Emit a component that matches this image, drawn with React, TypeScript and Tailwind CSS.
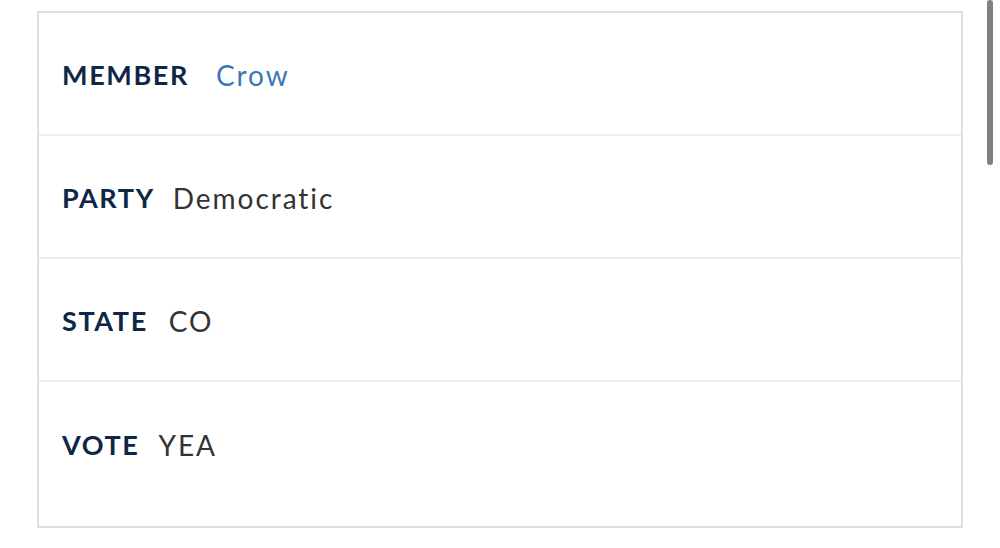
import React from "react";

const rows = [
  { label: "MEMBER", value: "Crow", link: true, gap: "ml-[27px]" },
  { label: "PARTY", value: "Democratic", link: false, gap: "ml-[18px]" },
  { label: "STATE", value: "CO", link: false, gap: "ml-[21px]" },
  { label: "VOTE", value: "YEA", link: false, gap: "ml-[19px]" },
];

export default function App() {
  return (
    <div className="relative w-[1000px] h-[548px] bg-white overflow-hidden" style={{ fontFamily: "Lato, 'Open Sans', sans-serif" }}>
      <div className="pt-[11px] pl-[37px]">
        <div className="w-[926px] border-2 border-[#e0e0e0] flex flex-col pb-[21px]">
          {rows.map((r, i) => (
            <div
              key={r.label}
              className={`h-[123px] flex items-center pl-[23px] pt-[3px] ${i < rows.length - 1 ? "border-b-2 border-[#ececec]" : ""}`}
            >
              <span className="text-[27px] font-bold tracking-[0.06em] text-[#0f2746]">{r.label}</span>
              <span className={`${r.gap} text-[28px] tracking-[0.07em] ${r.link ? "text-[#3a78b5]" : "text-[#333333]"}`}>{r.value}</span>
            </div>
          ))}
        </div>
      </div>
      <div className="absolute left-[987px] top-0 w-[6px] h-[165px] rounded-full bg-[#808080]" />
    </div>
  );
}
